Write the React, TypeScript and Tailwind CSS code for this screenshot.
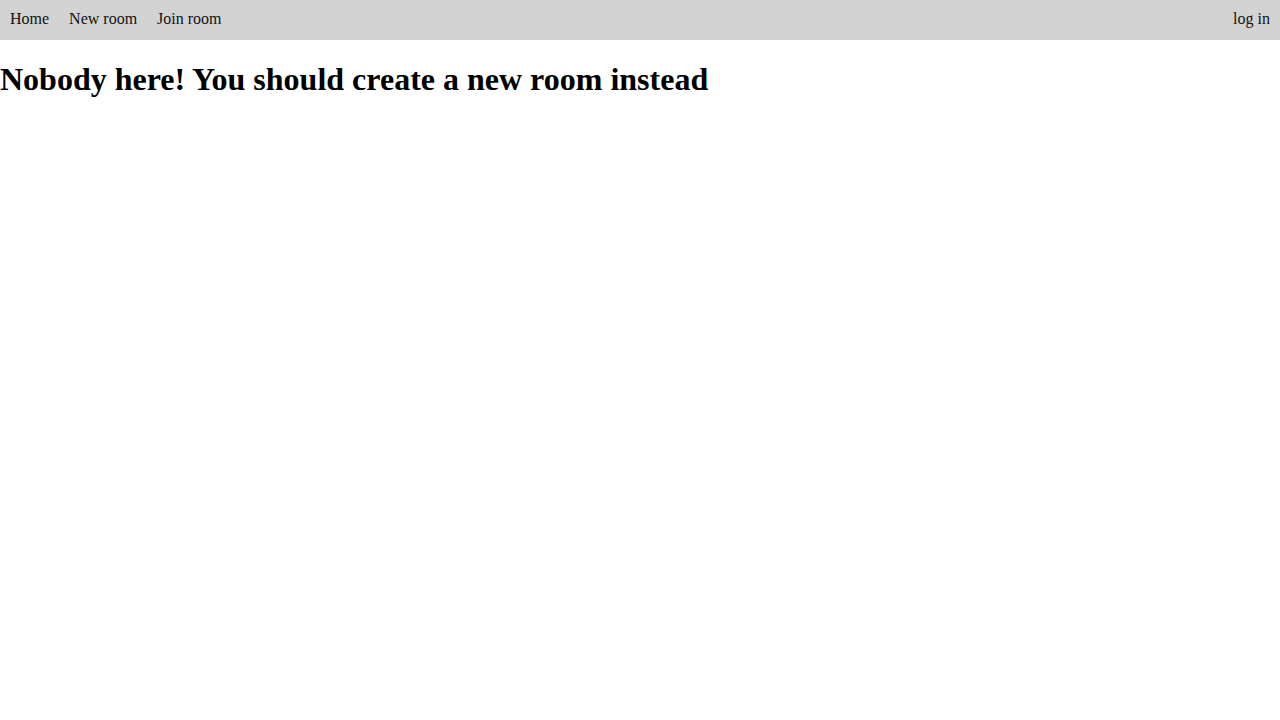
import React from "react";

const links = ["Home", "New room", "Join room"];

const App: React.FC = () => {
  return (
    <div className="min-h-screen bg-white text-black font-['Liberation_Serif',serif] leading-[normal]">
      <nav className="flex h-10 items-center justify-between bg-[#d3d3d3] pb-0.5 text-[#111]">
        <div className="flex">
          {links.map((link) => (
            <a key={link} href="#" className="px-[10px] text-base">
              {link}
            </a>
          ))}
        </div>
        <a href="#" className="px-[10px] text-base">
          log in
        </a>
      </nav>
      <h1 className="my-[21px] text-[32px] font-bold leading-[normal]">
        Nobody here! You should create a new room instead
      </h1>
    </div>
  );
};

export default App;
